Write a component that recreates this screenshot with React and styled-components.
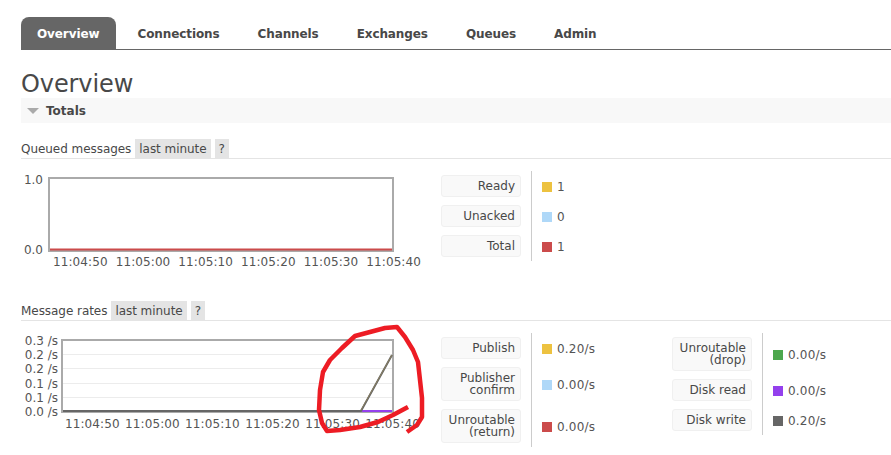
import React from 'react';
import styled, { createGlobalStyle } from 'styled-components';

const GlobalStyle = createGlobalStyle`
  html, body {
    margin: 0;
    padding: 0;
    background: #fff;
    overflow: hidden;
  }
  body {
    font-family: "DejaVu Sans", Verdana, sans-serif;
    font-size: 12px;
    color: #484848;
  }
`;

const Page = styled.div`
  position: relative;
  width: 891px;
  height: 455px;
  padding: 17px 0 0 21px;
  box-sizing: border-box;
  overflow: hidden;
`;

const Nav = styled.ul`
  display: flex;
  height: 32px;
  margin: 0;
  padding: 0;
  list-style: none;
  border-bottom: 1px solid #666;
`;

const NavItem = styled.li`
  display: flex;
  align-items: center;
  padding: 1px ${(p) => (p.$active ? '17px' : '16px')} 0 16px;
  margin-right: ${(p) => (p.$active ? '5px' : '6px')};
  font-size: 12px;
  font-weight: bold;
  letter-spacing: -0.1px;
  border-radius: 8px 8px 0 0;
  color: ${(p) => (p.$active ? '#fff' : '#484848')};
  background: ${(p) => (p.$active ? '#666' : 'transparent')};
`;

const Title = styled.h1`
  margin: 21px 0 0;
  height: 26px;
  line-height: 26px;
  font-size: 24px;
  font-weight: normal;
  letter-spacing: -0.1px;
  color: #484848;
`;

const SectionBar = styled.div`
  display: flex;
  align-items: center;
  height: 25px;
  margin-top: 1px;
  padding-left: 6px;
  background: #f8f8f8;
  font-weight: bold;
  font-size: 12px;
`;

const Caret = styled.span`
  width: 0;
  height: 0;
  margin-right: 7px;
  border-left: 6px solid transparent;
  border-right: 6px solid transparent;
  border-top: 6px solid #aaa;
`;

const RateHead = styled.div`
  display: flex;
  align-items: center;
  gap: 4px;
  height: 19px;
  margin-top: ${(p) => p.$top}px;
  letter-spacing: -0.05px;
  border-bottom: 1px solid #e4e4e4;
`;

const Tag = styled.span`
  display: flex;
  align-items: center;
  height: 19px;
  padding: 0 4px;
  background: #e4e4e4;
`;

const Row = styled.div`
  display: flex;
  align-items: flex-start;
  margin-top: 18px;
`;

const ChartWrap = styled.div`
  display: flex;
  width: 420px;
  flex-shrink: 0;
`;

const YAxis = styled.div`
  display: flex;
  flex-direction: column;
  justify-content: space-between;
  width: ${(p) => p.$width}px;
  height: ${(p) => p.$height}px;
  margin-top: ${(p) => p.$top}px;
  padding-right: ${(p) => p.$pad}px;
  box-sizing: border-box;
  text-align: right;
  line-height: 14px;
  color: #545454;
`;

const PlotCol = styled.div`
  display: flex;
  flex-direction: column;
`;

const Plot = styled.svg`
  display: block;
`;

const XAxis = styled.div`
  display: flex;
  justify-content: space-between;
  width: ${(p) => p.$width}px;
  margin: ${(p) => p.$gap}px 0 0 ${(p) => p.$left}px;
  line-height: 14px;
  font-size: 12px;
  letter-spacing: 0.1px;
  white-space: nowrap;
  color: #545454;
`;

const Legend = styled.div`
  display: grid;
  grid-template-columns: 80px auto;
  grid-auto-rows: auto;
  width: ${(p) => p.$width}px;
  margin-top: -6px;
  flex-shrink: 0;
`;

const LegendLabel = styled.div`
  box-sizing: border-box;
  width: 80px;
  margin: 4px 0;
  padding: 4px 5px 4px 3px;
  line-height: 12px;
  text-align: right;
  background: #f9f9f9;
  border: 1px solid #f0f0f0;
  border-radius: 3px;
  color: #484848;
`;

const LegendValue = styled.div`
  display: flex;
  align-items: center;
  gap: 5px;
  margin-left: 10px;
  padding: 2px 0 0 10px;
  border-left: 1px solid #ccc;
  letter-spacing: 0.2px;
  color: #545454;
`;

const Swatch = styled.span`
  width: 10px;
  height: 10px;
  background: ${(p) => p.$color};
`;

const Scribble = styled.svg`
  position: absolute;
  left: 0;
  top: 0;
  pointer-events: none;
`;

const queued = [
  ['Ready', '#edc240', '1'],
  ['Unacked', '#afd8f8', '0'],
  ['Total', '#cb4b4b', '1'],
];

const ratesLeft = [
  ['Publish', '#edc240', '0.20/s'],
  [<>Publisher<br />confirm</>, '#afd8f8', '0.00/s'],
  [<>Unroutable<br />(return)</>, '#cb4b4b', '0.00/s'],
];

const ratesRight = [
  [<>Unroutable<br />(drop)</>, '#4da74d', '0.00/s'],
  ['Disk read', '#9440ed', '0.00/s'],
  ['Disk write', '#666666', '0.20/s'],
];

const times = ['11:04:50', '11:05:00', '11:05:10', '11:05:20', '11:05:30', '11:05:40'];

const LegendTable = ({ rows, width }) => (
  <Legend $width={width}>
    {rows.map(([label, color, value], i) => (
      <React.Fragment key={i}>
        <LegendLabel>{label}</LegendLabel>
        <LegendValue>
          <Swatch $color={color} />
          {value}
        </LegendValue>
      </React.Fragment>
    ))}
  </Legend>
);

const App = () => (
  <Page>
    <GlobalStyle />
    <Nav>
      <NavItem $active>Overview</NavItem>
      <NavItem>Connections</NavItem>
      <NavItem>Channels</NavItem>
      <NavItem>Exchanges</NavItem>
      <NavItem>Queues</NavItem>
      <NavItem>Admin</NavItem>
    </Nav>
    <Title>Overview</Title>
    <SectionBar>
      <Caret />
      Totals
    </SectionBar>

    <RateHead $top={16}>
      Queued messages <Tag>last minute</Tag> <Tag>?</Tag>
    </RateHead>
    <Row>
      <ChartWrap>
        <YAxis $width={27} $pad={5} $top={-4} $height={84}>
          <span>1.0</span>
          <span>0.0</span>
        </YAxis>
        <PlotCol>
          <Plot width="346" height="75" viewBox="0 0 346 75">
            <rect x="1" y="1" width="344" height="73" fill="#fff" stroke="#aaa" strokeWidth="2" />
            <line x1="2" y1="72.5" x2="344" y2="72.5" stroke="#cb4b4b" strokeWidth="2" />
          </Plot>
          <XAxis $width={368} $left={5} $gap={3}>
            {times.map((t) => <span key={t}>{t}</span>)}
          </XAxis>
        </PlotCol>
      </ChartWrap>
      <LegendTable rows={queued} width={231} />
    </Row>

    <RateHead $top={32}>
      Message rates <Tag>last minute</Tag> <Tag>?</Tag>
    </RateHead>
    <Row>
      <ChartWrap>
        <YAxis $width={40} $pad={3} $top={-5} $height={85}>
          <span>0.3 /s</span>
          <span>0.2 /s</span>
          <span>0.2 /s</span>
          <span>0.1 /s</span>
          <span>0.1 /s</span>
          <span>0.0 /s</span>
        </YAxis>
        <PlotCol>
          <Plot width="333" height="74" viewBox="0 0 333 74">
            <rect x="1" y="1" width="331" height="72" fill="#fff" stroke="#aaa" strokeWidth="2" />
            <g stroke="#ececec" strokeWidth="1">
              <line x1="2" y1="15.5" x2="331" y2="15.5" />
              <line x1="2" y1="29.5" x2="331" y2="29.5" />
              <line x1="2" y1="44.5" x2="331" y2="44.5" />
              <line x1="2" y1="58.5" x2="331" y2="58.5" />
            </g>
            <line x1="301" y1="72" x2="331" y2="72" stroke="#9440ed" strokeWidth="2" />
            <polyline points="2,72 300,72 331,16" fill="none" stroke="#666" strokeWidth="2" />
            <line x1="300" y1="71" x2="331" y2="16" stroke="#8a8060" strokeWidth="1" />
          </Plot>
          <XAxis $width={355} $left={4} $gap={4}>
            {times.map((t) => <span key={t}>{t}</span>)}
          </XAxis>
        </PlotCol>
      </ChartWrap>
      <LegendTable rows={ratesLeft} width={231} />
      <LegendTable rows={ratesRight} width={200} />
    </Row>

    <Scribble width="891" height="455" viewBox="0 0 891 455">
      <path
        d="M408 407 L393 415 L378 422 L360 427 L340 430 L327 431 L322 423 L319 410 L320 390 L323 372 L330 360 L342 348 L355 336 L370 332 L385 328 L397 327 L405 337 L413 350 L418 362 L420 380 L422 398 L422 417 L417 425 L407 432"
        fill="none"
        stroke="#ed1c24"
        strokeWidth="4.5"
        strokeLinejoin="round"
      />
    </Scribble>
  </Page>
);

export default App;
